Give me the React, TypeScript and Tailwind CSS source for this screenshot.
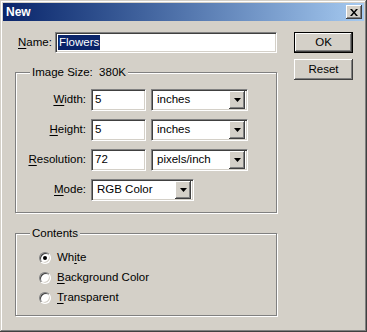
import React from "react";

const raised =
  "shadow-[inset_-1px_-1px_#404040,inset_1px_1px_#ffffff,inset_-2px_-2px_#808080,inset_2px_2px_#d4d0c8]";
const sunken =
  "border border-t-[#808080] border-l-[#808080] border-b-white border-r-white shadow-[inset_1px_1px_#404040,inset_-1px_-1px_#d4d0c8]";

function U({ children }: { children: React.ReactNode }) {
  return <span className="underline underline-offset-2 decoration-1">{children}</span>;
}

function DropArrow() {
  return (
    <div className={`w-[16px] h-[18px] bg-[#d4d0c8] flex items-center justify-center ${raised}`}>
      <svg width="7" height="4" viewBox="0 0 7 4">
        <path d="M0 0h7L3.5 4z" fill="#000" />
      </svg>
    </div>
  );
}

function Select({ value, w }: { value: string; w: string }) {
  return (
    <div className={`${w} h-[22px] bg-white flex items-center justify-between pl-[5px] pr-[2px] ${sunken}`}>
      <span className="text-black">{value}</span>
      <DropArrow />
    </div>
  );
}

function Field({ value }: { value: string }) {
  return (
    <div className={`w-[55px] h-[22px] bg-white flex items-center pl-[3px] ${sunken}`}>
      <span className="text-black">{value}</span>
    </div>
  );
}

function Row({ label, value, unit }: { label: React.ReactNode; value: string; unit: string }) {
  return (
    <div className="flex items-center h-[22px]">
      <div className="w-[71px] text-right pr-[1px]">{label}</div>
      <div className="ml-[4px]">
        <Field value={value} />
      </div>
      <div className="ml-[5px]">
        <Select value={unit} w="w-[97px]" />
      </div>
    </div>
  );
}

function Radio({ checked, label }: { checked?: boolean; label: React.ReactNode }) {
  return (
    <div className="flex items-center h-[20px]">
      <div className="ml-[23px] w-[12px] h-[12px] rounded-full bg-white border border-t-[#808080] border-l-[#808080] border-b-white border-r-white shadow-[inset_1px_1px_#404040,inset_-1px_-1px_#d4d0c8] flex items-center justify-center">
        {checked && <div className="w-[4px] h-[4px] rounded-full bg-black" />}
      </div>
      <span className="ml-[6px]">{label}</span>
    </div>
  );
}

export default function App() {
  return (
    <div
      className="w-[367px] h-[332px] bg-[#d4d0c8] p-[3px] flex flex-col text-[11.5px] leading-none text-black shadow-[inset_-1px_-1px_#404040,inset_1px_1px_#d4d0c8,inset_-2px_-2px_#808080,inset_2px_2px_#ffffff]"
      style={{ fontFamily: '"Liberation Sans", Arial, sans-serif' }}
    >
      {/* Title bar */}
      <div className="h-[18px] flex items-center justify-between bg-gradient-to-r from-[#0a246a] to-[#a6caf0]">
        <span className="pl-[3px] text-white font-bold text-[12px]">New</span>
        <div className={`w-[16px] h-[14px] mr-[2px] bg-[#d4d0c8] flex items-center justify-center ${raised}`}>
          <svg width="8" height="7" viewBox="0 0 8 7">
            <path d="M0 0h2l2 2.5L6 0h2L5 3.5 8 7H6L4 4.5 2 7H0l3-3.5z" fill="#000" />
          </svg>
        </div>
      </div>

      {/* Body */}
      <div className="flex pl-[12px] pt-[11px]">
        <div className="w-[262px] flex flex-col">
          <div className="flex items-center h-[21px]">
            <div className="w-[40px] pl-[3px]">
              <U>N</U>ame:
            </div>
            <div className={`flex-1 h-[21px] bg-white flex items-center pl-[2px] ${sunken}`}>
              <span className="bg-[#0a246a] text-white px-[1px] py-[2px]">Flowers</span>
            </div>
          </div>

          {/* Image Size group */}
          <div className="relative mt-[19px] h-[141px] border border-[#808080] shadow-[inset_1px_1px_#ffffff,1px_1px_#ffffff] pt-[16px] flex flex-col gap-[8px]">
            <span className="absolute left-[14px] -top-[6px] px-[2px] bg-[#d4d0c8] whitespace-pre">Image Size:  380K</span>
            <Row label={<><U>W</U>idth:</>} value="5" unit="inches" />
            <Row label={<><U>H</U>eight:</>} value="5" unit="inches" />
            <Row label={<><U>R</U>esolution:</>} value="72" unit="pixels/inch" />
            <div className="flex items-center h-[22px]">
              <div className="w-[71px] text-right pr-[1px]">
                <U>M</U>ode:
              </div>
              <div className="ml-[4px]">
                <Select value="RGB Color" w="w-[103px]" />
              </div>
            </div>
          </div>

          {/* Contents group */}
          <div className="relative mt-[20px] h-[83px] border border-[#808080] shadow-[inset_1px_1px_#ffffff,1px_1px_#ffffff] pt-[14px] flex flex-col">
            <span className="absolute left-[14px] -top-[6px] px-[2px] bg-[#d4d0c8]">Contents</span>
            <Radio checked label={<>Wh<U>i</U>te</>} />
            <Radio label={<><U>B</U>ackground Color</>} />
            <Radio label={<><U>T</U>ransparent</>} />
          </div>
        </div>

        {/* Buttons */}
        <div className="ml-[17px] w-[59px] flex flex-col gap-[6px]">
          <div className="h-[21px] border border-black">
            <div className={`h-full bg-[#d4d0c8] flex items-center justify-center ${raised}`}>OK</div>
          </div>
          <div className={`h-[21px] bg-[#d4d0c8] flex items-center justify-center ${raised}`}>Reset</div>
        </div>
      </div>
    </div>
  );
}
